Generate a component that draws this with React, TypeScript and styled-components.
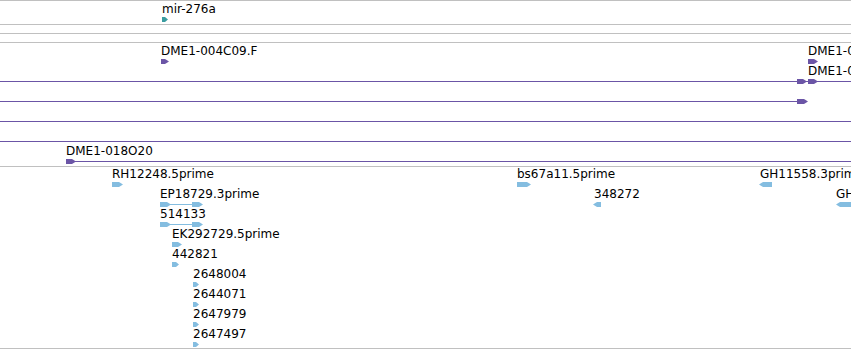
import React from "react"
import styled, { createGlobalStyle } from "styled-components"

const GRAY = "#c0c0c0"
const PURPLE = "#6b55a6"
const TEAL = "#3a9ca0"
const BLUE = "#84bde0"

type Block = { x: number; w: number; left?: boolean }
type Feat = {
    label?: string
    lx?: number
    row: number
    color: string
    line?: [number, number]
    blocks: Block[]
}
type TrackData = { height: number; offset: number; features: Feat[] }

const tracks: TrackData[] = [
    {
        height: 23,
        offset: 1,
        features: [{ label: "mir-276a", lx: 162, row: 0, color: TEAL, blocks: [{ x: 162, w: 6 }] }],
    },
    { height: 8, offset: 0, features: [] },
    { height: 8, offset: 0, features: [] },
    {
        height: 123,
        offset: 1,
        features: [
            { label: "DME1-004C09.F", lx: 161, row: 0, color: PURPLE, blocks: [{ x: 161, w: 8 }] },
            { label: "DME1-004C09.R", lx: 808, row: 0, color: PURPLE, blocks: [{ x: 808, w: 10 }] },
            {
                label: "DME1-017B03.F",
                lx: 808,
                row: 1,
                color: PURPLE,
                line: [-10, 861],
                blocks: [{ x: 797, w: 10 }, { x: 808, w: 10 }],
            },
            { row: 2, color: PURPLE, line: [-10, 800], blocks: [{ x: 797, w: 11 }] },
            { row: 3, color: PURPLE, line: [-10, 861], blocks: [] },
            { row: 4, color: PURPLE, line: [-10, 861], blocks: [] },
            {
                label: "DME1-018O20",
                lx: 66,
                row: 5,
                color: PURPLE,
                line: [66, 861],
                blocks: [{ x: 66, w: 10 }],
            },
        ],
    },
    {
        height: 181,
        offset: 0,
        features: [
            { label: "RH12248.5prime", lx: 112, row: 0, color: BLUE, blocks: [{ x: 112, w: 11 }] },
            { label: "bs67a11.5prime", lx: 517, row: 0, color: BLUE, blocks: [{ x: 517, w: 14 }] },
            { label: "GH11558.3prime", lx: 760, row: 0, color: BLUE, blocks: [{ x: 759, w: 13, left: true }] },
            {
                label: "EP18729.3prime",
                lx: 160,
                row: 1,
                color: BLUE,
                line: [160, 200],
                blocks: [{ x: 160, w: 11 }, { x: 192, w: 11 }],
            },
            { label: "348272", lx: 594, row: 1, color: BLUE, blocks: [{ x: 593, w: 8, left: true }] },
            { label: "GH21394.3prime", lx: 836, row: 1, color: BLUE, blocks: [{ x: 836, w: 20, left: true }] },
            {
                label: "514133",
                lx: 160,
                row: 2,
                color: BLUE,
                line: [160, 200],
                blocks: [{ x: 160, w: 11 }, { x: 192, w: 11 }],
            },
            { label: "EK292729.5prime", lx: 172, row: 3, color: BLUE, blocks: [{ x: 172, w: 10 }] },
            { label: "442821", lx: 172, row: 4, color: BLUE, blocks: [{ x: 172, w: 7 }] },
            { label: "2648004", lx: 193, row: 5, color: BLUE, blocks: [{ x: 193, w: 6 }] },
            { label: "2644071", lx: 193, row: 6, color: BLUE, blocks: [{ x: 193, w: 6 }] },
            { label: "2647979", lx: 193, row: 7, color: BLUE, blocks: [{ x: 193, w: 6 }] },
            { label: "2647497", lx: 193, row: 8, color: BLUE, blocks: [{ x: 193, w: 6 }] },
        ],
    },
]

const arrowPoints = ({ x, w, left }: Block) => {
    const tip = Math.min(4, Math.floor(w / 2))
    if (left) {
        return `${x},2.5 ${x + tip},0 ${x + w},0 ${x + w},5 ${x + tip},5`
    }
    return `${x},0 ${x + w - tip},0 ${x + w},2.5 ${x + w - tip},5 ${x},5`
}

const GlyphRow: React.FC<{ feat: Feat; top: number }> = ({ feat, top }) => (
    <Glyph width={851} height={5} style={{ top }}>
        {feat.line && (
            <line
                x1={feat.line[0]}
                x2={feat.line[1]}
                y1={2.5}
                y2={2.5}
                stroke={feat.color}
                strokeWidth={1}
            />
        )}
        {feat.blocks.map((b, i) => (
            <polygon key={i} points={arrowPoints(b)} fill={feat.color} />
        ))}
    </Glyph>
)

const App: React.FC = () => {
    return (
        <>
            <GlobalStyle />
            <Panel>
                {tracks.map((t, ti) => (
                    <Track key={ti} $h={t.height} $last={ti === tracks.length - 1}>
                        {t.features.map((f, fi) => {
                            const top = t.offset + f.row * 20
                            return (
                                <React.Fragment key={fi}>
                                    {f.label && (
                                        <Label style={{ left: f.lx, top }}>{f.label}</Label>
                                    )}
                                    <GlyphRow feat={f} top={top + 15} />
                                </React.Fragment>
                            )
                        })}
                    </Track>
                ))}
            </Panel>
        </>
    )
}

const GlobalStyle = createGlobalStyle`
    html, body {
        margin: 0;
        padding: 0;
        background: #fff;
    }
    body {
        width: 851px;
        height: 350px;
        overflow: hidden;
        font-family: "DejaVu Sans", "Liberation Sans", sans-serif;
    }
`

const Panel = styled.div`
    display: flex;
    flex-direction: column;
    width: 851px;
    overflow: hidden;
`

const Track = styled.div<{ $h: number; $last?: boolean }>`
    position: relative;
    height: ${(p) => p.$h}px;
    border-top: 1px solid ${GRAY};
    border-bottom: ${(p) => (p.$last ? `1px solid ${GRAY}` : "none")};
    overflow: hidden;
`

const Label = styled.span`
    position: absolute;
    font-size: 12px;
    line-height: 14px;
    color: #000;
    white-space: nowrap;
`

const Glyph = styled.svg`
    position: absolute;
    left: 0;
    display: block;
    overflow: visible;
`

export default App
